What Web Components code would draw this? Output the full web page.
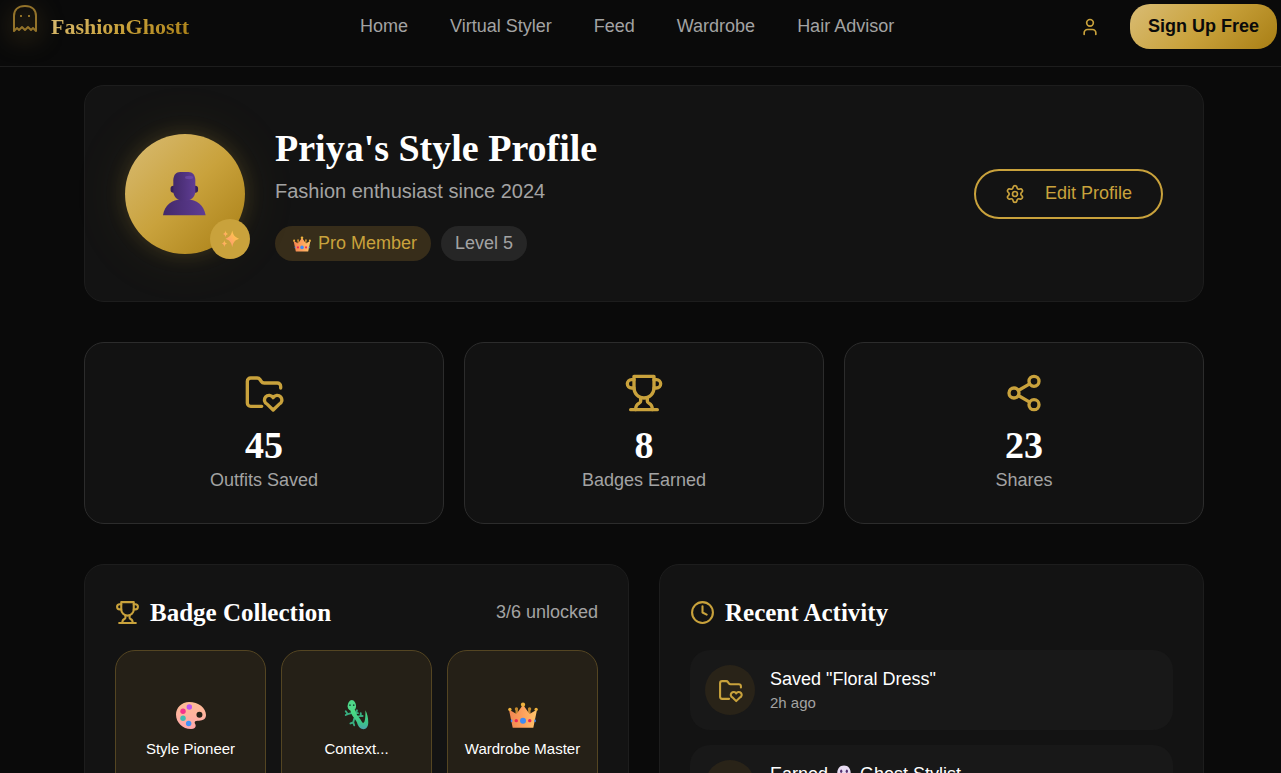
<!DOCTYPE html>
<html lang="en">
<head>
<meta charset="utf-8">
<meta name="viewport" content="width=device-width, initial-scale=1">
<title>FashionGhostt - Profile</title>
<style>
    html{
        scrollbar-width: none;
    }
    body{
        margin: 0;
        background-color: #0a0a0a;
        color: #fff;
        font-family: "Liberation Sans", Arial, sans-serif;
        font-size: 18px;
        --gold: #c9a23c;
        --gold-gradient: #d9bc74, #c9a23c 50%, #a87e14;
        --gray: #a3a3a3;
        --serif: "Liberation Serif", "Times New Roman", serif;
    }
</style>
</head>
<body>
<profile-page></profile-page>

<script>
// line icons, 24x24 grid
const icons = {
    user: `<path d="M19 21v-2a4 4 0 0 0-4-4H9a4 4 0 0 0-4 4v2"/><circle cx="12" cy="7" r="4"/>`,
    settings: `<path d="M9.671 4.136a2.34 2.34 0 0 1 4.659 0 2.34 2.34 0 0 0 3.319 1.915 2.34 2.34 0 0 1 2.33 4.033 2.34 2.34 0 0 0 0 3.831 2.34 2.34 0 0 1-2.33 4.033 2.34 2.34 0 0 0-3.319 1.915 2.34 2.34 0 0 1-4.659 0 2.34 2.34 0 0 0-3.32-1.915 2.34 2.34 0 0 1-2.33-4.033 2.34 2.34 0 0 0 0-3.831A2.34 2.34 0 0 1 6.35 6.051a2.34 2.34 0 0 0 3.319-1.915"/><circle cx="12" cy="12" r="3"/>`,
    folder: `<path d="M10.638 20H4a2 2 0 0 1-2-2V5a2 2 0 0 1 2-2h3.9a2 2 0 0 1 1.69.9l.81 1.2a2 2 0 0 0 1.67.9H20a2 2 0 0 1 2 2v1"/><path d="M14 18.800A2.800 2.800 0 1 1 17.500 14.800a2.800 2.800 0 1 1 3.500 4l-3.500 3.400z"/>`,
    trophy: `<path d="M6 9H4.5a2.5 2.5 0 0 1 0-5H6M18 9h1.5a2.5 2.5 0 0 0 0-5H18M4 22h16"/><path d="M10 14.66V17c0 .55-.47.98-.97 1.21C7.85 18.75 7 20.24 7 22M14 14.66V17c0 .55.47.98.97 1.21C16.15 18.75 17 20.24 17 22"/><path d="M18 2H6v7a6 6 0 0 0 12 0V2Z"/>`,
    share: `<circle cx="18" cy="5" r="3"/><circle cx="6" cy="12" r="3"/><circle cx="18" cy="19" r="3"/><path d="m8.59 13.51 6.83 3.98M15.41 6.51l-6.82 3.98"/>`,
    clock: `<circle cx="12" cy="12" r="10"/><path d="M12 6v6l4 2"/>`
};

// colour pictures, 32x32 grid
const pictures = {
    person: `<defs><linearGradient id="a" x1="0" x2="1"><stop stop-color="#43296a"/><stop offset="1" stop-color="#5f3d94"/></linearGradient></defs>
        <rect x="5.500" y="10" width="4" height="5" rx="2" fill="#35205a"/><rect x="21.500" y="10" width="4" height="5" rx="2" fill="#35205a"/>
        <path d="M0 31.500C1 24 7 20 13 20v-2h5v2c6 0 12 4 13 11.500z" fill="url(#a)"/>
        <path d="M7.500 6c0-3.500 2-6 5-6h6c3 0 5 2.500 5 6v8c0 4-3 7-8 7s-8-3-8-7z" fill="url(#a)"/>
        <ellipse cx="19" cy="4" rx="3" ry="1.200" fill="#7450ad" opacity=".6"/>`,
    sparkles: `<defs><linearGradient id="a" x1="1" y1="0" x2="0" y2="1"><stop stop-color="#ffd43d"/><stop offset="1" stop-color="#ff8f7d"/></linearGradient></defs>
        <g fill="url(#a)"><path d="M20 1c2 8.500 4 11.500 12 14.500-8 3-10 6-12 14.500-2-8.500-4-11.500-12-14.500C16 12.500 18 9.500 20 1z"/>
        <path d="M8 1c.7 4 1.500 5 4.500 6C9.500 8 8.700 9 8 13c-.7-4-1.500-5-4.500-6C6.500 6 7.300 5 8 1z"/>
        <path d="M6 18c.8 4 1.800 5 5 6-3.200 1-4.200 2-5 6-.8-4-1.800-5-5-6 3.200-1 4.200-2 5-6z"/></g>`,
    crown: `<defs><linearGradient id="a"><stop stop-color="#f08450"/><stop offset=".55" stop-color="#ffa45d"/><stop offset="1" stop-color="#fdc46b"/></linearGradient></defs>
        <g fill="#c48a2e"><circle cx="9" cy="9.500" r="1.800"/><circle cx="23" cy="9.500" r="1.800"/><path d="M8 10h2.500v8H8zM21.500 10H24v8h-2.500z"/></g>
        <path d="M1 10l8 5 7-10 7 10 8-5-4 19.500H5z" fill="url(#a)"/>
        <g fill="#efb23d"><circle cx="16" cy="5" r="2.300"/><circle cx="2" cy="10" r="1.800"/><circle cx="30" cy="10" r="1.800"/></g>
        <circle cx="16" cy="22" r="3.200" fill="#3f8bf5"/><circle cx="8.800" cy="22" r="1.800" fill="#ee2455"/><circle cx="23.200" cy="22" r="1.800" fill="#ee2455"/>
        <ellipse cx="3.800" cy="22" rx=".9" ry="1.600" fill="#3f8bf5"/><ellipse cx="28.800" cy="22" rx=".9" ry="1.600" fill="#3f8bf5"/>`,
    palette: `<defs><linearGradient id="a" x1="0" y1="0" x2="0" y2="1"><stop stop-color="#ffbd94"/><stop offset="1" stop-color="#ffa7ab"/></linearGradient></defs>
        <path fill-rule="evenodd" fill="url(#a)" d="M14 2C6 2 0 8 0 15.500 0 24 7 31 16 31c3.500 0 5-1.500 5-3.500s-1.500-2.500-1-4 2-1.500 4.500-1.500C29 22 32 20 32 16 32 8 24 2 14 2zM25 12.500a3.200 3.200 0 1 1 0 6.400 3.200 3.200 0 0 1 0-6.400z"/>
        <circle cx="14.200" cy="7.500" r="2.900" fill="#bd57f0"/><circle cx="7.500" cy="12" r="2.900" fill="#f5348c"/><circle cx="7.500" cy="19.500" r="2.900" fill="#3fbdb2"/><circle cx="13.500" cy="25" r="2.900" fill="#4293f7"/>`,
    lizard: `<defs><linearGradient id="a" x1="0" y1="0" x2="0" y2="1"><stop stop-color="#4ee083"/><stop offset=".7" stop-color="#3cc28a"/><stop offset="1" stop-color="#4ba2ad"/></linearGradient></defs>
        <g fill="none" stroke="#38ad80" stroke-width="2" stroke-linecap="round" stroke-linejoin="round"><path d="M10 14l-4 1-2-3M6 15l-2 1M12 12l3 2 1-3M15 14l2 0M13 20l-1 4-3 1M12 24l1 3M16 18l4-1 0-3M20 17l2 0"/></g>
        <path d="M9 10c0 6 5 9 7 14 2 9 12 10 12 0 0-5-1-9-3-13 0 5 0 9-1 12-1 2-2 2-3 0-2-5-6-6-7-13z" fill="url(#a)"/>
        <path d="M10.500 0c2.500 0 4.500 3.500 4.500 7 0 2.700-2 4.500-4.500 4.500S6 9.700 6 7c0-3.500 2-7 4.500-7z" fill="#4fd989"/>
        <circle cx="8.500" cy="5.500" r=".9" fill="#174d38"/><circle cx="12.500" cy="5.500" r=".9" fill="#174d38"/>`,
    ghost: `<path d="M16 1C8 1 4 7 4 15v13c0 3 3 3 4 1 1 3 5 3 6 0 1 3 4 3 5 0 1 3 4 3 5 0 1 2 4 2 4-1V15C28 7 24 1 16 1z" fill="#e8dcf2"/>
        <ellipse cx="11" cy="11" rx="2" ry="3" fill="#55306f"/><ellipse cx="21" cy="11" rx="2" ry="3" fill="#55306f"/><path d="M8 17h16c0 4-3 6-8 6s-8-2-8-6z" fill="#a734b5"/>`
};

class LineIcon extends HTMLElement{
    constructor(){
        super();
        this.attachShadow({ mode: "open" });
        this.shadowRoot.innerHTML = `
<style>
    :host{
        display: block;
        flex: none;
        width: 20px;
        height: 20px;
        color: var(--gold);
    }
    svg{
        display: block;
        width: 100%;
        height: 100%;
    }
</style>
<svg viewBox="0 0 24 24" fill="none" stroke="currentColor" stroke-width="2" stroke-linecap="round" stroke-linejoin="round" aria-hidden="true">${icons[this.getAttribute("name")]}</svg>
`;
    }
}

class ColorPicture extends HTMLElement{
    constructor(){
        super();
        this.attachShadow({ mode: "open" });
        this.shadowRoot.innerHTML = `
<style>
    :host{
        display: inline-block;
        flex: none;
        width: 18px;
        height: 18px;
    }
    svg{
        display: block;
        width: 100%;
        height: 100%;
    }
</style>
<svg viewBox="0 0 32 32" aria-hidden="true">${pictures[this.getAttribute("name")]}</svg>
`;
    }
}

class SiteHeader extends HTMLElement{
    constructor(){
        super();
        this.attachShadow({ mode: "open" });
        this.shadowRoot.innerHTML = `
<style>
    :host{
        display: block;
        border-bottom: 1px solid #1d1d1d;
    }
    header{
        display: flex;
        justify-content: space-between;
        padding: 4px 4px 17px 10px;
    }
    a{
        color: inherit;
        text-decoration: none;
    }
    .brand{
        display: flex;
        gap: 11px;
    }
    .brand svg{
        width: 30px;
        height: 30px;
        filter: drop-shadow(0 5px 12px rgba(201, 162, 60, .6));
    }
    .brand span{
        align-self: center;
        font: bold 22px/30px var(--serif);
        background: linear-gradient(135deg, var(--gold-gradient));
        -webkit-background-clip: text;
        background-clip: text;
        color: transparent;
    }
    nav{
        display: flex;
        align-items: center;
        gap: 42px;
        color: var(--gray);
    }
    .actions{
        display: flex;
        align-items: center;
        gap: 15px;
    }
    button{
        border: 0;
        font: inherit;
        cursor: pointer;
    }
    .user{
        padding: 12px 15px;
        background: none;
    }
    .signup{
        height: 45px;
        padding: 0 18px;
        border-radius: 20px;
        background: linear-gradient(135deg, var(--gold-gradient));
        color: #0a0a0a;
        font-weight: bold;
    }
</style>
<header>
    <a class="brand" href="#">
        <svg viewBox="0 0 30 30" fill="none" stroke="#93732a" stroke-width="2" stroke-linejoin="round" aria-hidden="true">
            <path d="M4 27V12C4 6 8 2 15 2s11 4 11 10v15l-3-3-2 2-3-3-3 3-3-3-3 3-2-2z"/>
            <g fill="#b8912f" stroke="none"><circle cx="11" cy="12" r="1"/><circle cx="19" cy="12" r="1"/></g>
        </svg>
        <span>FashionGhostt</span>
    </a>
    <nav>
        <a href="#">Home</a>
        <a href="#">Virtual Styler</a>
        <a href="#">Feed</a>
        <a href="#">Wardrobe</a>
        <a href="#">Hair Advisor</a>
    </nav>
    <div class="actions">
        <button class="user" aria-label="Account"><line-icon name="user"></line-icon></button>
        <button class="signup">Sign Up Free</button>
    </div>
</header>
`;
    }
}

class ProfileCard extends HTMLElement{
    constructor(){
        super();
        this.attachShadow({ mode: "open" });
        this.shadowRoot.innerHTML = `
<style>
    :host{
        display: flex;
        align-items: center;
        gap: 30px;
        padding: 40px;
        border: 1px solid #1d1d1d;
        border-radius: 20px;
        background-color: #131313;
    }
    .avatar{
        position: relative;
        display: grid;
        place-items: center;
        width: 120px;
        height: 120px;
        border-radius: 50%;
        background: linear-gradient(135deg, var(--gold-gradient));
        box-shadow: 0 0 20px rgba(201, 162, 60, .2), 0 0 60px rgba(201, 162, 60, .1);
    }
    .avatar color-picture{
        width: 44px;
        height: 44px;
    }
    .spark{
        position: absolute;
        right: -5px;
        bottom: -5px;
        display: grid;
        place-items: center;
        width: 40px;
        height: 40px;
        border-radius: 50%;
        background-color: #c9a23c;
    }
    .spark color-picture{
        width: 18px;
        height: 18px;
    }
    .info{
        flex: 1;
    }
    h1{
        margin: 0 0 5px;
        font: bold 38px/45px var(--serif);
    }
    p{
        margin: 0 0 20px;
        color: var(--gray);
        font-size: 20px;
        line-height: 30px;
    }
    .pills{
        display: flex;
        gap: 10px;
    }
    .pill{
        display: flex;
        align-items: center;
        gap: 7px;
        height: 35px;
        padding: 0 14px;
        border-radius: 18px;
        background-color: #262626;
        color: var(--gray);
    }
    .pro{
        padding-left: 18px;
        background-color: #372d1a;
        color: var(--gold);
    }
    button{
        display: flex;
        align-items: center;
        gap: 20px;
        height: 50px;
        padding: 0 29px;
        border: 2px solid var(--gold);
        border-radius: 25px;
        background: none;
        color: var(--gold);
        font: inherit;
        cursor: pointer;
    }
</style>
<div class="avatar">
    <color-picture name="person"></color-picture>
    <div class="spark"><color-picture name="sparkles"></color-picture></div>
</div>
<div class="info">
    <h1><slot name="name"></slot></h1>
    <p><slot name="since"></slot></p>
    <div class="pills">
        <span class="pill pro"><color-picture name="crown"></color-picture>Pro Member</span>
        <span class="pill">Level 5</span>
    </div>
</div>
<button><line-icon name="settings"></line-icon>Edit Profile</button>
`;
    }
}

class StatCard extends HTMLElement{
    constructor(){
        super();
        this.attachShadow({ mode: "open" });
        this.shadowRoot.innerHTML = `
<style>
    :host{
        display: flex;
        flex-direction: column;
        align-items: center;
        padding: 30px;
        border: 1px solid #2c2c2c;
        border-radius: 20px;
        background-color: #121212;
    }
    line-icon{
        width: 40px;
        height: 40px;
        margin-bottom: 10px;
    }
    strong{
        font: bold 38px/45px var(--serif);
    }
    span{
        color: var(--gray);
        line-height: 25px;
    }
</style>
<line-icon name="${this.getAttribute("icon")}"></line-icon>
<strong>${this.getAttribute("value")}</strong>
<span><slot></slot></span>
`;
    }
}

class TitledPanel extends HTMLElement{
    constructor(){
        super();
        this.attachShadow({ mode: "open" });
        this.shadowRoot.innerHTML = `
<style>
    :host{
        display: block;
        padding: 30px;
        border: 1px solid #1d1d1d;
        border-radius: 20px;
        background-color: #131313;
    }
    .head{
        display: flex;
        align-items: center;
        gap: 10px;
        height: 35px;
        margin-bottom: 20px;
    }
    line-icon{
        width: 25px;
        height: 25px;
    }
    h2{
        flex: 1;
        margin: 0;
        font: bold 25px/35px var(--serif);
    }
    .note{
        color: var(--gray);
    }
</style>
<div class="head">
    <line-icon name="${this.getAttribute("icon")}"></line-icon>
    <h2>${this.getAttribute("heading")}</h2>
    <span class="note"><slot name="note"></slot></span>
</div>
<slot></slot>
`;
    }
}

class BadgeCard extends HTMLElement{
    constructor(){
        super();
        this.attachShadow({ mode: "open" });
        this.shadowRoot.innerHTML = `
<style>
    :host{
        display: flex;
        flex-direction: column;
        align-items: center;
        justify-content: center;
        gap: 8px;
        box-sizing: border-box;
        aspect-ratio: 1;
        padding-top: 8px;
        border: 1px solid #544522;
        border-radius: 20px;
        background-color: #252017;
        font-size: 15px;
        line-height: 22px;
    }
    color-picture{
        width: 30px;
        height: 30px;
    }
</style>
<color-picture name="${this.getAttribute("picture")}"></color-picture>
<span><slot></slot></span>
`;
    }
}

class ActivityRow extends HTMLElement{
    constructor(){
        super();
        this.attachShadow({ mode: "open" });
        this.shadowRoot.innerHTML = `
<style>
    :host{
        display: flex;
        align-items: center;
        gap: 15px;
        padding: 15px;
        border-radius: 20px;
        background-color: #181818;
    }
    .circle{
        display: grid;
        place-items: center;
        width: 50px;
        height: 50px;
        border-radius: 50%;
        background-color: #292318;
    }
    line-icon{
        width: 25px;
        height: 25px;
    }
    .text{
        line-height: 26px;
    }
    time{
        display: block;
        color: var(--gray);
        font-size: 15px;
        line-height: 22px;
    }
</style>
<div class="circle"><line-icon name="${this.getAttribute("icon")}"></line-icon></div>
<div class="text">
    <slot></slot>
    <time>${this.getAttribute("when")}</time>
</div>
`;
    }
}

class ProfilePage extends HTMLElement{
    constructor(){
        super();
        this.attachShadow({ mode: "open" });
        this.shadowRoot.innerHTML = `
<style>
    :host{
        display: block;
    }
    main{
        display: grid;
        gap: 40px;
        padding: 18px 77px 40px 84px;
    }
    .stats{
        display: grid;
        grid-template-columns: repeat(3, 1fr);
        gap: 20px;
    }
    .panels{
        display: grid;
        grid-template-columns: repeat(2, 1fr);
        gap: 30px;
    }
    .badges{
        display: grid;
        grid-template-columns: repeat(3, 1fr);
        gap: 15px;
    }
    .activity{
        display: grid;
        gap: 15px;
    }
    .activity color-picture{
        margin: 0 2px;
        vertical-align: -3px;
    }
</style>
<site-header></site-header>
<main>
    <profile-card>
        <span slot="name">Priya's Style Profile</span>
        <span slot="since">Fashion enthusiast since 2024</span>
    </profile-card>
    <section class="stats">
        <stat-card icon="folder" value="45">Outfits Saved</stat-card>
        <stat-card icon="trophy" value="8">Badges Earned</stat-card>
        <stat-card icon="share" value="23">Shares</stat-card>
    </section>
    <section class="panels">
        <titled-panel icon="trophy" heading="Badge Collection">
            <span slot="note">3/6 unlocked</span>
            <div class="badges">
                <badge-card picture="palette">Style Pioneer</badge-card>
                <badge-card picture="lizard">Context...</badge-card>
                <badge-card picture="crown">Wardrobe Master</badge-card>
            </div>
        </titled-panel>
        <titled-panel icon="clock" heading="Recent Activity">
            <div class="activity">
                <activity-row icon="folder" when="2h ago">Saved "Floral Dress"</activity-row>
                <activity-row icon="trophy" when="1d ago">Earned <color-picture name="ghost"></color-picture> Ghost Stylist</activity-row>
            </div>
        </titled-panel>
    </section>
</main>
`;
    }
}

customElements.define("line-icon", LineIcon);
customElements.define("color-picture", ColorPicture);
customElements.define("site-header", SiteHeader);
customElements.define("profile-card", ProfileCard);
customElements.define("stat-card", StatCard);
customElements.define("titled-panel", TitledPanel);
customElements.define("badge-card", BadgeCard);
customElements.define("activity-row", ActivityRow);
customElements.define("profile-page", ProfilePage);
</script>
</body>
</html>
